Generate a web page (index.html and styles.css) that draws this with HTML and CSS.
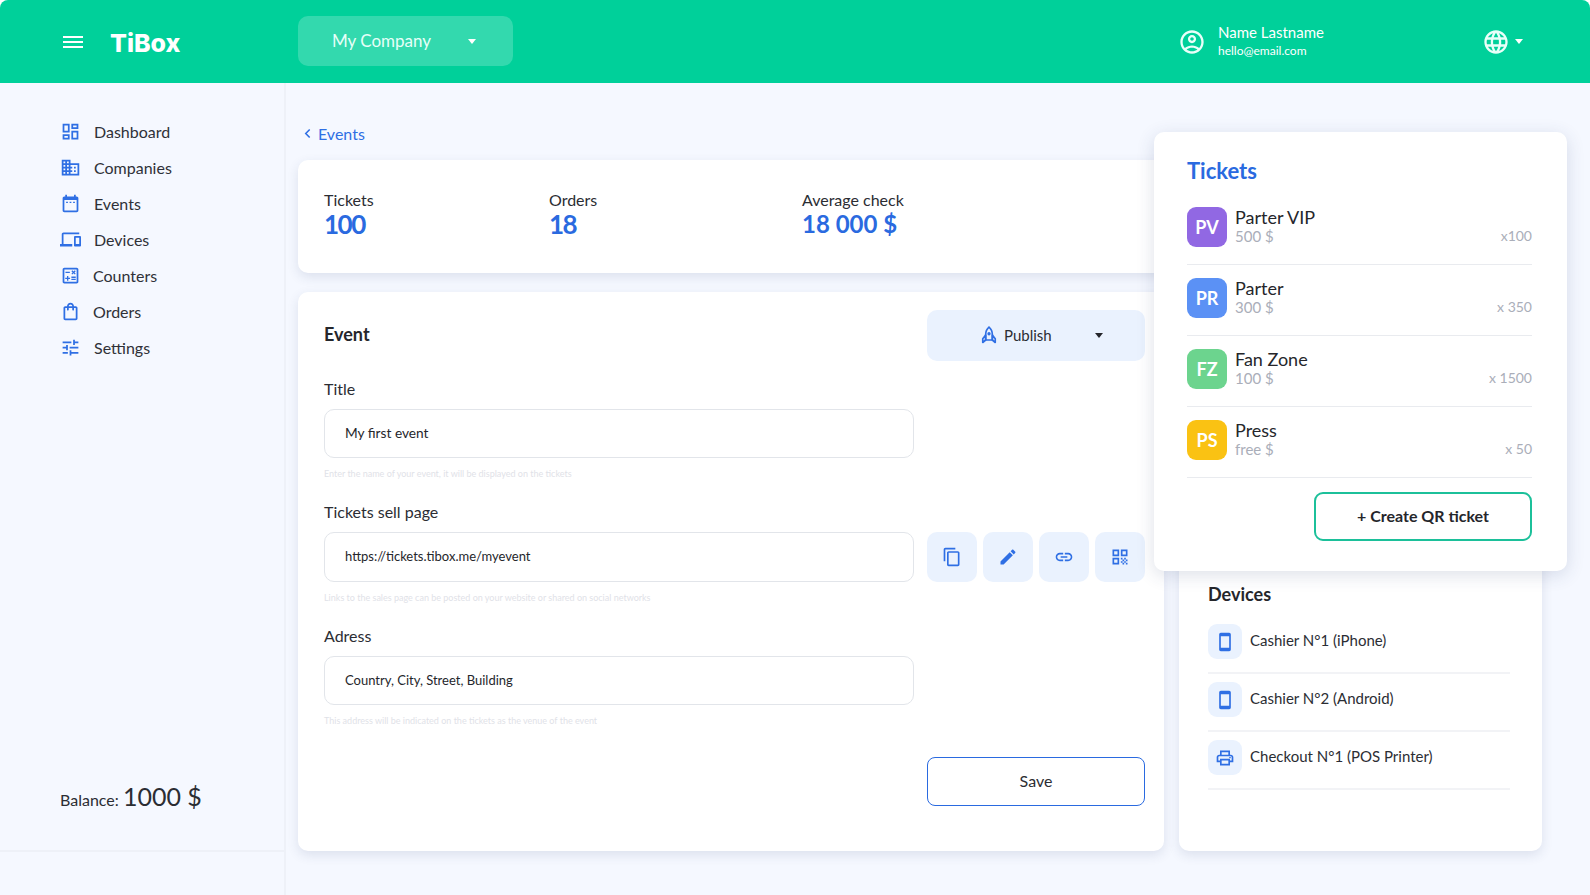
FILE: index.html
```html
<!DOCTYPE html>
<html lang="en">
<head>
    <meta charset="UTF-8">
    <meta name="viewport" content="width=device-width, initial-scale=1.0">
    <title>TiBox - Event</title>
    <link rel="stylesheet" href="styles.css">
</head>
<body>
    <div class="app">
        <header class="topbar">
            <svg class="menu-icon" viewBox="0 0 20 14" width="20" height="14"><path d="M0 1h20v2H0zM0 6h20v2H0zM0 11h20v2H0z"/></svg>
            <div class="logo">TiBox</div>
            <div class="company-select">
                <span>My Company</span>
                <i class="caret"></i>
            </div>
            <div class="user">
                <svg class="icon-24" viewBox="0 0 24 24"><path d="M12 2C6.48 2 2 6.48 2 12s4.48 10 10 10 10-4.48 10-10S17.52 2 12 2zM7.35 18.5C8.66 17.56 10.26 17 12 17s3.34.56 4.65 1.5c-1.31.94-2.91 1.5-4.65 1.5s-3.34-.56-4.65-1.5zm10.79-1.38C16.45 15.8 14.32 15 12 15s-4.45.8-6.14 2.12C4.7 15.73 4 13.95 4 12c0-4.42 3.58-8 8-8s8 3.58 8 8c0 1.95-.7 3.73-1.86 5.12z"/><path d="M12 6c-1.93 0-3.5 1.57-3.5 3.5S10.07 13 12 13s3.5-1.57 3.5-3.5S13.93 6 12 6zm0 5c-.83 0-1.5-.67-1.5-1.5S11.17 8 12 8s1.5.67 1.5 1.5S12.83 11 12 11z"/></svg>
                <div class="user-text">
                    <div class="user-name">Name Lastname</div>
                    <div class="user-mail">hello@email.com</div>
                </div>
            </div>
            <div class="lang">
                <svg class="icon-24" viewBox="0 0 24 24"><path d="M11.99 2C6.47 2 2 6.48 2 12s4.47 10 9.99 10C17.52 22 22 17.52 22 12S17.52 2 11.99 2zm6.93 6h-2.95c-.32-1.25-.78-2.45-1.38-3.56 1.84.63 3.37 1.91 4.33 3.56zM12 4.04c.83 1.2 1.48 2.53 1.91 3.96h-3.82c.43-1.43 1.08-2.76 1.91-3.96zM4.26 14C4.1 13.36 4 12.69 4 12s.1-1.36.26-2h3.38c-.08.66-.14 1.32-.14 2 0 .68.06 1.34.14 2H4.26zm.82 2h2.95c.32 1.25.78 2.45 1.38 3.56-1.84-.63-3.37-1.9-4.33-3.56zm2.95-8H5.08c.96-1.66 2.49-2.93 4.33-3.56C8.81 5.55 8.35 6.75 8.03 8zM12 19.96c-.83-1.2-1.48-2.53-1.91-3.96h3.82c-.43 1.43-1.08 2.76-1.91 3.96zM14.34 14H9.66c-.09-.66-.16-1.32-.16-2 0-.68.07-1.35.16-2h4.68c.09.65.16 1.32.16 2 0 .68-.07 1.34-.16 2zm.25 5.56c.6-1.11 1.06-2.31 1.38-3.56h2.95c-.96 1.65-2.49 2.93-4.33 3.56zM16.36 14c.08-.66.14-1.32.14-2 0-.68-.06-1.34-.14-2h3.38c.16.64.26 1.31.26 2s-.1 1.36-.26 2h-3.38z"/></svg>
                <i class="caret small"></i>
            </div>
        </header>

        <div class="layout">
            <aside class="sidebar">
                <nav class="nav">
                    <a class="nav-item"><svg viewBox="0 0 24 24"><path d="M19 5v2h-4V5h4M9 5v6H5V5h4m10 8v6h-4v-6h4M9 17v2H5v-2h4M21 3h-8v6h8V3zM11 3H3v10h8V3zm10 8h-8v10h8V11zm-10 4H3v6h8v-6z"/></svg>Dashboard</a>
                    <a class="nav-item"><svg viewBox="0 0 24 24"><path d="M12 7V3H2v18h20V7H12zM6 19H4v-2h2v2zm0-4H4v-2h2v2zm0-4H4V9h2v2zm0-4H4V5h2v2zm4 12H8v-2h2v2zm0-4H8v-2h2v2zm0-4H8V9h2v2zm0-4H8V5h2v2zm10 12h-8v-2h2v-2h-2v-2h2v-2h-2V9h8v10zm-2-8h-2v2h2v-2zm0 4h-2v2h2v-2z"/></svg>Companies</a>
                    <a class="nav-item"><svg viewBox="0 0 24 24"><path d="M19 4h-1V2h-2v2H8V2H6v2H5c-1.1 0-2 .9-2 2v14c0 1.1.9 2 2 2h14c1.1 0 2-.9 2-2V6c0-1.1-.9-2-2-2zm0 16H5V8h14v12z"/><path d="M7 10h2v1.500H7zM11 10h2v1.500h-2zM15 10h2v1.500h-2z"/></svg>Events</a>
                    <a class="nav-item"><svg viewBox="0 0 24 24"><path d="M4 6h18V4H4c-1.100 0-2 .9-2 2v11H0v3h14v-3H4V6zm19 2h-6c-.55 0-1 .45-1 1v10c0 .55.45 1 1 1h6c.55 0 1-.45 1-1V9c0-.55-.45-1-1-1zm-1 9h-4v-7h4v7z"/></svg>Devices</a>
                    <a class="nav-item tight"><svg viewBox="0 0 24 24"><path d="M19 3H5c-1.100 0-2 .9-2 2v14c0 1.100.9 2 2 2h14c1.100 0 2-.9 2-2V5c0-1.100-.9-2-2-2zm0 16H5V5h14v14z"/><path d="M6.250 7.720h5v1.500h-5zM13 15.750h5v1.500h-5zM13 13.250h5v1.500h-5zM8 18h1.500v-2h2v-1.500h-2v-2H8v2H6V16h2zM14.090 10.950l1.410-1.410 1.410 1.410 1.060-1.060-1.410-1.420 1.410-1.410L16.910 6 15.500 7.410 14.090 6l-1.060 1.060 1.410 1.410-1.410 1.420z"/></svg>Counters</a>
                    <a class="nav-item tight"><svg viewBox="0 0 24 24"><path d="M18 6h-2c0-2.210-1.790-4-4-4S8 3.790 8 6H6c-1.100 0-2 .9-2 2v12c0 1.100.9 2 2 2h12c1.100 0 2-.9 2-2V8c0-1.100-.9-2-2-2zm-6-2c1.100 0 2 .9 2 2h-4c0-1.100.9-2 2-2zm6 16H6V8h2v2c0 .55.45 1 1 1s1-.45 1-1V8h4v2c0 .55.45 1 1 1s1-.45 1-1V8h2v12z"/></svg>Orders</a>
                    <a class="nav-item"><svg viewBox="0 0 24 24"><path d="M3 17v2h6v-2H3zM3 5v2h10V5H3zm10 16v-2h8v-2h-8v-2h-2v6h2zM7 9v2H3v2h4v2h2V9H7zm14 4v-2H11v2h10zm-6-4h2V7h4V5h-4V3h-2v6z"/></svg>Settings</a>
                </nav>
                <div class="balance">Balance: <b>1000 $</b></div>
            </aside>

            <main class="content">
                <a class="back-link"><svg viewBox="0 0 8 12" width="7" height="11"><path d="M6.500 1.500 2 6l4.500 4.500" fill="none" stroke="currentColor" stroke-width="1.800"/></svg>Events</a>

                <section class="card stats">
                    <div class="stat s1"><div class="stat-label">Tickets</div><div class="stat-value">100</div></div>
                    <div class="stat s2"><div class="stat-label">Orders</div><div class="stat-value">18</div></div>
                    <div class="stat"><div class="stat-label">Average check</div><div class="stat-value small">18 000 $</div></div>
                </section>

                <div class="columns">
                    <section class="card event">
                        <div class="event-head">
                            <h2>Event</h2>
                            <button class="publish">
                                <svg viewBox="0 0 24 24" width="20" height="20"><path d="M12 2.500C9 5 8 8 8 11.500V18h8v-6.500C16 8 15 5 12 2.500z" fill="none" stroke="#2f6fe4" stroke-width="2"/><path d="M8 12 4.500 16.500V21L8 18zM16 12l3.500 4.500V21L16 18z" fill="none" stroke="#2f6fe4" stroke-width="2" stroke-linejoin="round"/><circle cx="12" cy="10.500" r="2" fill="#2f6fe4"/></svg>
                                <span>Publish</span>
                                <i class="caret dark"></i>
                            </button>
                        </div>

                        <div class="field">
                            <label>Title</label>
                            <div class="input title-input">My first event</div>
                            <div class="hint">Enter the name of your event, it will be displayed on the tickets</div>
                        </div>

                        <div class="field">
                            <label>Tickets sell page</label>
                            <div class="input url-input">https://tickets.tibox.me/myevent</div>
                            <div class="url-actions">
                                <button class="icon-btn"><svg viewBox="0 0 24 24"><path d="M16 1H4c-1.100 0-2 .9-2 2v14h2V3h12V1zm3 4H8c-1.100 0-2 .9-2 2v14c0 1.100.9 2 2 2h11c1.100 0 2-.9 2-2V7c0-1.100-.9-2-2-2zm0 16H8V7h11v14z"/></svg></button>
                                <button class="icon-btn"><svg viewBox="0 0 24 24"><path d="M3 17.250V21h3.750L17.810 9.940l-3.750-3.750L3 17.250zM20.710 7.040c.39-.39.39-1.020 0-1.410l-2.340-2.340c-.39-.39-1.020-.39-1.410 0l-1.830 1.830 3.750 3.750 1.830-1.830z"/></svg></button>
                                <button class="icon-btn"><svg viewBox="0 0 24 24"><path d="M3.900 12c0-1.710 1.390-3.100 3.100-3.100h4V7H7c-2.760 0-5 2.240-5 5s2.240 5 5 5h4v-1.900H7c-1.710 0-3.100-1.390-3.100-3.100zM8 13h8v-2H8v2zm9-6h-4v1.900h4c1.710 0 3.100 1.390 3.100 3.100s-1.390 3.100-3.100 3.100h-4V17h4c2.760 0 5-2.240 5-5s-2.240-5-5-5z"/></svg></button>
                                <button class="icon-btn"><svg viewBox="0 0 24 24"><path d="M3 3h8v8H3zm2 2v4h4V5zM13 3h8v8h-8zm2 2v4h4V5zM3 13h8v8H3zm2 2v4h4v-4zM13 13h2v2h-2zM17 13h2v2h-2zM15 15h2v2h-2zM19 15h2v2h-2zM13 17h2v2h-2zM17 17h2v2h-2zM15 19h2v2h-2zM19 19h2v2h-2z"/></svg></button>
                            </div>
                            <div class="hint">Links to the sales page can be posted on your website or shared on social networks</div>
                        </div>

                        <div class="field">
                            <label>Adress</label>
                            <div class="input">Country, City, Street, Building</div>
                            <div class="hint">This address will be indicated on the tickets as the venue of the event</div>
                        </div>

                        <div class="event-foot"><button class="save">Save</button></div>
                    </section>

                    <section class="card devices">
                        <h2>Devices</h2>
                        <div class="device"><span class="device-icon"><svg viewBox="0 0 24 24"><path d="M17 1.010 7 1c-1.100 0-2 .9-2 2v18c0 1.100.9 2 2 2h10c1.100 0 2-.9 2-2V3c0-1.100-.9-1.990-2-1.990zM17 19H7V5h10v14z"/></svg></span><span class="device-name">Cashier N°1 (iPhone)</span></div>
                        <div class="device"><span class="device-icon"><svg viewBox="0 0 24 24"><path d="M17 1.010 7 1c-1.100 0-2 .9-2 2v18c0 1.100.9 2 2 2h10c1.100 0 2-.9 2-2V3c0-1.100-.9-1.990-2-1.990zM17 19H7V5h10v14z"/></svg></span><span class="device-name">Cashier N°2 (Android)</span></div>
                        <div class="device"><span class="device-icon"><svg viewBox="0 0 24 24"><path d="M19 8h-1V3H6v5H5c-1.660 0-3 1.340-3 3v6h4v4h12v-4h4v-6c0-1.660-1.340-3-3-3zM8 5h8v3H8V5zm8 12v2H8v-4h8v2zm2-2v-2H6v2H4v-4c0-.55.45-1 1-1h14c.55 0 1 .45 1 1v4h-2z"/><circle cx="18" cy="11.500" r="1"/></svg></span><span class="device-name">Checkout N°1 (POS Printer)</span></div>
                    </section>
                </div>

                <!-- floating panel over the cards -->
                <section class="card tickets">
                    <h2>Tickets</h2>
                    <div class="ticket">
                        <span class="avatar purple">PV</span>
                        <div class="ticket-info"><div class="ticket-name">Parter VIP</div><div class="ticket-price">500 $</div></div>
                        <div class="ticket-count">x100</div>
                    </div>
                    <div class="ticket">
                        <span class="avatar blue">PR</span>
                        <div class="ticket-info"><div class="ticket-name">Parter</div><div class="ticket-price">300 $</div></div>
                        <div class="ticket-count">x 350</div>
                    </div>
                    <div class="ticket">
                        <span class="avatar green">FZ</span>
                        <div class="ticket-info"><div class="ticket-name">Fan Zone</div><div class="ticket-price">100 $</div></div>
                        <div class="ticket-count">x 1500</div>
                    </div>
                    <div class="ticket">
                        <span class="avatar yellow">PS</span>
                        <div class="ticket-info"><div class="ticket-name">Press</div><div class="ticket-price">free $</div></div>
                        <div class="ticket-count">x 50</div>
                    </div>
                    <div class="tickets-foot"><button class="create-btn">+ Create QR ticket</button></div>
                </section>
            </main>
        </div>
    </div>
</body>
</html>
```

FILE: styles.css
```css
* {
    box-sizing: border-box;
}
body {
    margin: 0;
    background: #fff;
    font-family: "Lato", "Open Sans", sans-serif;
    color: #2b2d33;
}
h2 {
    margin: 0;
    font-size: 18px;
    line-height: 24px;
    font-weight: 700;
    color: #25262b;
}
button {
    font-family: inherit;
    cursor: pointer;
}
.app {
    height: 895px;
    display: flex;
    flex-direction: column;
    overflow: hidden;
}

/* top bar */
.topbar {
    height: 83px;
    flex: none;
    display: flex;
    align-items: center;
    padding: 0 67px 0 63px;
    background: #00d09a;
    border-radius: 8px 8px 0 0;
    color: #fff;
}
.menu-icon {
    fill: #fff;
}
.logo {
    width: 188px;
    margin: 2px 0 0 27px;
    font-family: "Inter", sans-serif;
    font-size: 25px;
    font-weight: 800;
}
.company-select {
    width: 215px;
    height: 50px;
    margin-top: -1px;
    padding: 0 37px 2px 34px;
    display: flex;
    align-items: center;
    justify-content: space-between;
    background: rgba(255, 255, 255, 0.2);
    border-radius: 10px;
    font-size: 17px;
    color: #e6fff8;
}
.caret {
    width: 0;
    height: 0;
    border-left: 4.500px solid transparent;
    border-right: 4.500px solid transparent;
    border-top: 5px solid #fff;
}
.company-select .caret {
    margin-top: 3px;
}
.caret.dark {
    border-top-color: #25262b;
}
.user {
    width: 304px;
    margin-left: auto;
    display: flex;
    align-items: center;
    gap: 12px;
}
.icon-24 {
    width: 28px;
    height: 28px;
    fill: #e9fff9;
    flex: none;
}
.user-name {
    font-size: 15px;
    line-height: 20px;
}
.user-mail {
    margin-top: 1px;
    font-size: 12px;
    line-height: 16px;
}
.user-text {
    margin-top: -3px;
}
.lang {
    display: flex;
    align-items: center;
    gap: 5px;
}

/* sidebar */
.layout {
    flex: 1;
    display: flex;
    min-height: 0;
    background: #f5f8ff;
}
.sidebar {
    width: 286px;
    flex: none;
    display: flex;
    flex-direction: column;
    padding-top: 30px;
    border-right: 2px solid #eef1f8;
}
.nav-item {
    height: 36px;
    padding-left: 60px;
    display: flex;
    align-items: center;
    gap: 13px;
    font-size: 16px;
    color: #2f3138;
}
.nav-item svg {
    width: 21px;
    height: 21px;
    fill: #2f6fe4;
    flex: none;
}
.nav-item.tight {
    gap: 12px;
}
.balance {
    margin: auto -2px 43px 0;
    height: 71px;
    padding-left: 60px;
    border-bottom: 2px solid #eef1f8;
    font-size: 16px;
    color: #2b2d33;
}
.balance b {
    font-size: 25px;
    font-weight: 400;
}

/* main area */
.content {
    flex: 1;
    position: relative;
    padding: 39px 48px 44px 12px;
    display: flex;
    flex-direction: column;
}
.back-link {
    height: 24px;
    margin-bottom: 14px;
    padding: 0 0 2px 6px;
    display: flex;
    align-items: center;
    gap: 7px;
    font-size: 16px;
    color: #2f6fe4;
}
.card {
    background: #fff;
    border-radius: 10px;
    box-shadow: 0 4px 12px rgba(45, 60, 110, 0.12);
}
.stats {
    height: 113px;
    flex: none;
    padding: 30px 0 0 26px;
    display: flex;
}
.stat.s1 {
    width: 225px;
}
.stat.s2 {
    width: 253px;
}
.stat-label {
    font-size: 16px;
    line-height: 20px;
}
.stat-value {
    font-size: 26px;
    line-height: 28px;
    font-weight: 700;
    letter-spacing: -1.500px;
    color: #2a6ae0;
}
.stat-value.small {
    font-size: 24px;
    letter-spacing: 0;
}
.columns {
    flex: 1;
    margin-top: 19px;
    display: flex;
    gap: 15px;
    min-height: 0;
}

/* event form */
.event {
    width: 866px;
    flex: none;
    padding: 18px 19px 0 26px;
}
.event-head {
    height: 51px;
    display: flex;
    align-items: center;
    justify-content: space-between;
    margin-bottom: 18px;
}
.event-head h2 {
    margin-top: -4px;
}
.publish {
    width: 218px;
    height: 51px;
    padding: 0 40px 2px 52px;
    display: flex;
    align-items: center;
    gap: 5px;
    background: #eaf2fe;
    border: 0;
    border-radius: 10px;
    font-size: 15px;
    color: #2b2d33;
}
.publish .caret {
    margin: 2px 2px 0 auto;
}
.field {
    display: grid;
    grid-template-columns: 590px 218px;
    column-gap: 13px;
    margin-bottom: 22px;
}
.field label {
    grid-column: 1;
    font-size: 16px;
    line-height: 20px;
    margin-bottom: 10px;
}
.input {
    grid-column: 1;
    height: 49px;
    padding: 0 20px 2px;
    display: flex;
    align-items: center;
    border: 1px solid #e2e5ea;
    border-radius: 10px;
    font-size: 13px;
    color: #25262b;
}
.title-input {
    font-size: 13.700px;
}
.url-input {
    height: 50px;
}
.hint {
    grid-column: 1;
    margin-top: 10px;
    font-size: 9px;
    line-height: 12px;
    color: #dfe2e8;
}
.url-actions {
    grid-column: 2;
    grid-row: 2;
    display: grid;
    grid-template-columns: repeat(4, 1fr);
    gap: 6px;
}
.icon-btn {
    padding: 0;
    display: flex;
    align-items: center;
    justify-content: center;
    background: #eaf2fe;
    border: 0;
    border-radius: 10px;
}
.icon-btn svg {
    width: 20px;
    height: 20px;
    fill: #2f6fe4;
}
.event-foot {
    margin-top: 30px;
    display: flex;
    justify-content: flex-end;
}
.save {
    width: 218px;
    height: 49px;
    padding: 0 0 3px;
    background: #fff;
    border: 1px solid #2a6ae0;
    border-radius: 8px;
    font-size: 16px;
    color: #2b2d33;
}

/* devices */
.devices {
    flex: 1;
    padding: 0 32px 61px 29px;
    display: flex;
    flex-direction: column;
    justify-content: flex-end;
}
.devices h2 {
    margin-bottom: 10px;
}
.device {
    height: 58px;
    padding: 8px 0 13px;
    display: flex;
    align-items: center;
    gap: 8px;
    font-size: 15px;
    border-bottom: 2px solid #f2f3f6;
}
.device-name {
    padding-bottom: 3px;
}
.device-icon {
    width: 34px;
    height: 35px;
    display: flex;
    align-items: center;
    justify-content: center;
    background: #eaf2fe;
    border-radius: 9px;
    flex: none;
}
.device-icon svg {
    width: 20px;
    height: 20px;
    fill: #2f6fe4;
}

/* floating tickets panel */
.tickets {
    position: absolute;
    top: 49px;
    right: 23px;
    width: 413px;
    height: 439px;
    padding: 26px 35px 0 33px;
    box-shadow: 0 4px 18px rgba(45, 60, 110, 0.16);
}
.tickets h2 {
    font-size: 22px;
    line-height: 26px;
    margin-bottom: 10px;
    color: #2a6ae0;
}
.ticket {
    height: 71px;
    padding: 13px 0 17px;
    display: flex;
    align-items: flex-start;
    gap: 8px;
    border-bottom: 1px solid #e9ebef;
}
.avatar {
    width: 40px;
    height: 40px;
    flex: none;
    display: flex;
    align-items: center;
    justify-content: center;
    border-radius: 9px;
    font-size: 18px;
    font-weight: 700;
    color: #fff;
}
.purple {
    background: #9168e3;
}
.blue {
    background: #5b91f5;
}
.green {
    background: #6cd48e;
}
.yellow {
    background: #fac213;
}
.ticket-info {
    flex: 1;
}
.ticket-name {
    font-size: 18px;
    line-height: 20px;
    color: #25262b;
}
.ticket-price, .ticket-count {
    font-size: 15px;
    line-height: 18px;
    color: #aaaeb9;
}
.ticket-count {
    margin-top: 20px;
    font-size: 14px;
}
.tickets-foot {
    margin-top: 14px;
    display: flex;
    justify-content: flex-end;
}
.create-btn {
    width: 218px;
    height: 49px;
    padding: 0 0 2px;
    background: #fff;
    border: 2px solid #1cc09a;
    border-radius: 9px;
    font-size: 16px;
    font-weight: 700;
    color: #25262b;
}
```
